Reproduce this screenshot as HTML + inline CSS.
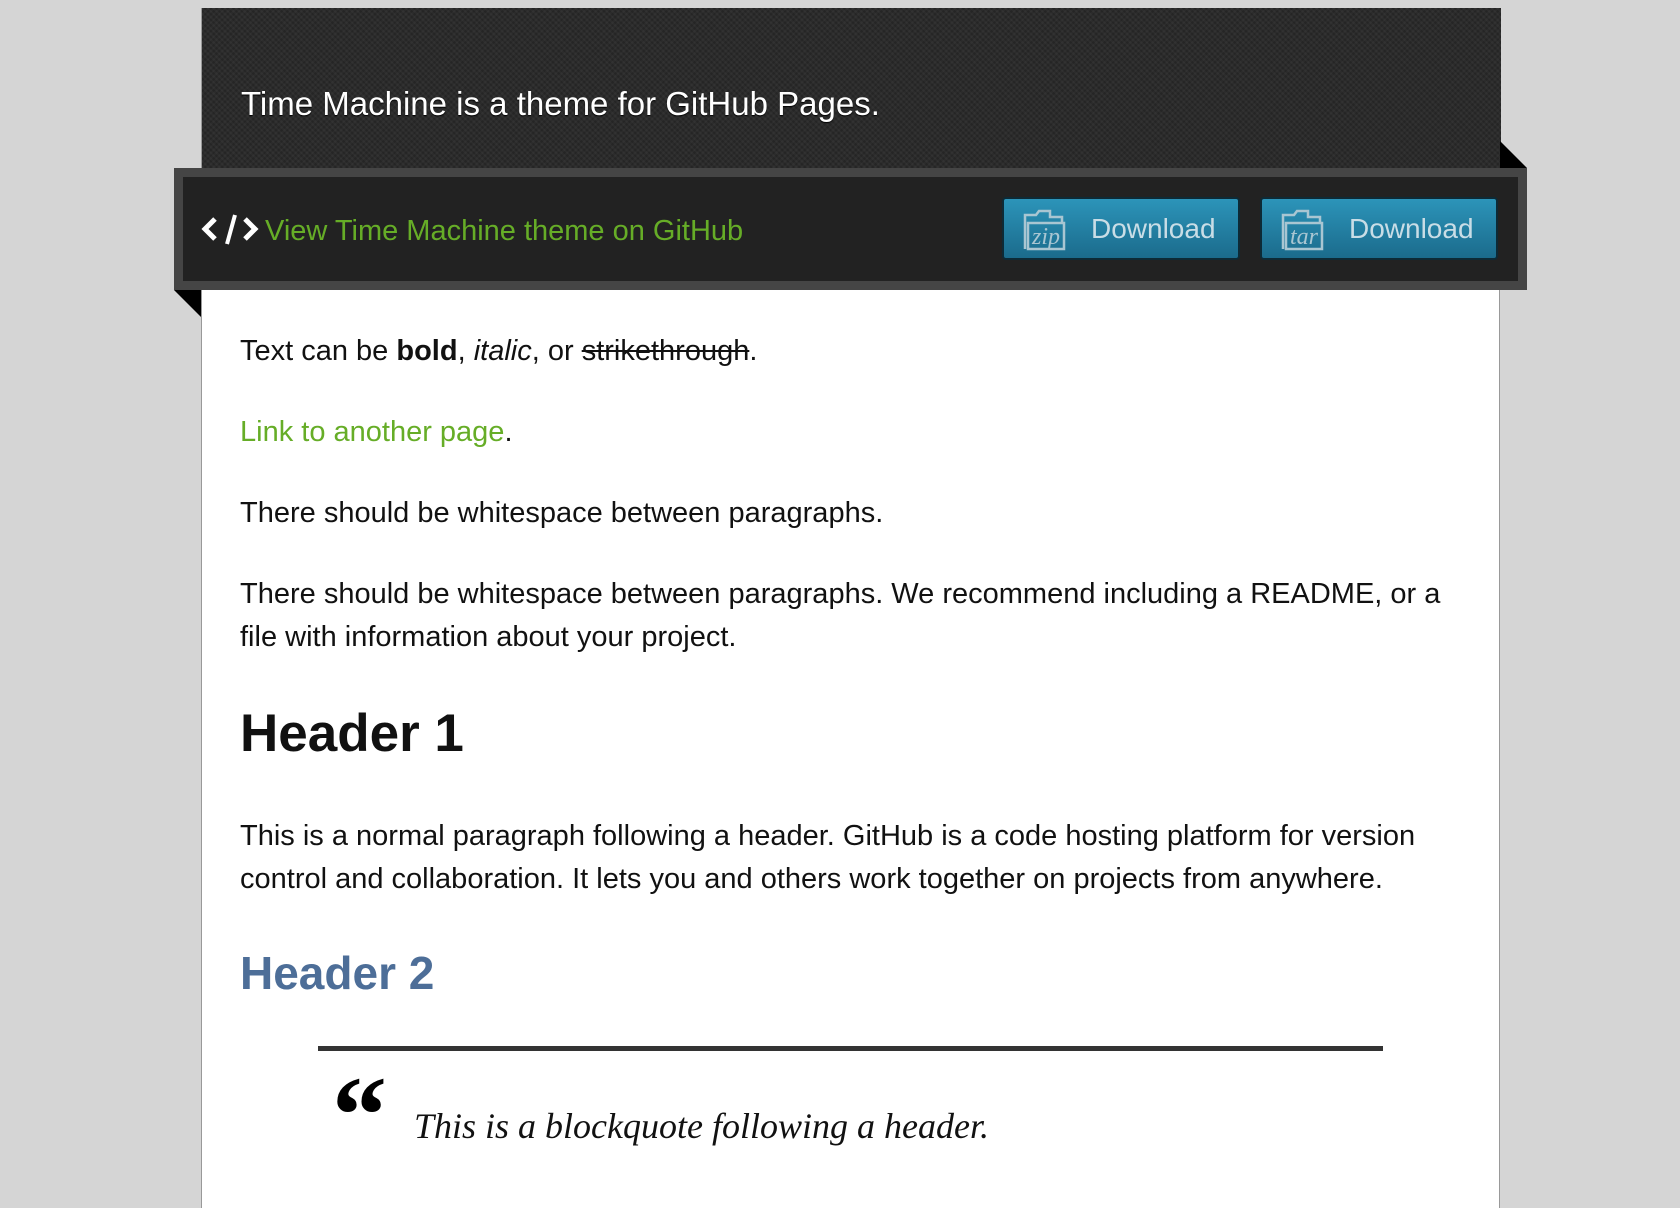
<!DOCTYPE html>
<html><head><meta charset="utf-8"><style>
html,body{margin:0;padding:0;background:#d5d5d5;width:1680px;height:1185px;overflow:hidden;font-family:"Liberation Sans",Arial,sans-serif}
#wrap{position:absolute;left:201px;top:8px;width:1299px;height:1200px;background:#fff;border-left:1px solid #999;border-right:1px solid #999;box-sizing:border-box}
#head{position:absolute;left:0;top:0;width:1299px;height:160px;background:#2b2b2b;background-image:repeating-linear-gradient(45deg,rgba(255,255,255,.03) 0 2px,transparent 2px 4px),repeating-linear-gradient(-45deg,rgba(0,0,0,.15) 0 2px,transparent 2px 4px)}
#head h1{position:absolute;left:39px;top:78px;margin:0;font-size:33px;font-weight:normal;color:#fff;line-height:36px;text-shadow:0 1px 1px #000;white-space:nowrap}
#nav{position:absolute;left:174px;top:168px;width:1353px;height:122px;background:#222;border:9px solid #454545;box-sizing:border-box}
.tri1{position:absolute;left:1500px;top:141px;width:0;height:0;border-left:27px solid #000;border-top:27px solid transparent}
.tri2{position:absolute;left:174px;top:290px;width:0;height:0;border-left:27px solid transparent;border-top:27px solid #000}
#nav .gh{position:absolute;left:18px;top:34px;font-size:29px;color:#66ad27;line-height:40px;white-space:nowrap}
#nav .gh svg{vertical-align:-6px;margin-right:4px}
.btn{position:absolute;top:20px;width:238px;height:63px;border:2px solid #0d2a36;border-radius:4px;background:linear-gradient(#2c94b9,#1b6b8c);box-sizing:border-box;color:#c9dde6;font-size:28px;line-height:59px}
.btn svg{position:absolute;left:18px;top:10px}
.btn span{position:absolute;left:87px}
#content{position:absolute;left:240px;top:330px;width:1300px;color:#111;font-size:29px;line-height:43px;white-space:nowrap}
p{margin:0 0 38px 0}
a{color:#66ad27;text-decoration:none}
h2.h1{font-size:53px;margin:0;line-height:60px;position:absolute;top:374px;color:#111}
h2.h2{font-size:46px;margin:0;line-height:52px;position:absolute;top:617px;color:#4d6e98}
</style></head><body>
<div id="wrap">
<div id="head"><h1>Time Machine is a theme for GitHub Pages.</h1></div>
</div>
<div class="tri1"></div><div class="tri2"></div>
<div id="nav">
<div class="gh"><svg width="60" height="34" viewBox="0 0 60 34"><path d="M14 7 L4 17 L14 27" fill="none" stroke="#fff" stroke-width="5"/><path d="M34 3 L26 32" fill="none" stroke="#fff" stroke-width="4"/><path d="M44 7 L54 17 L44 27" fill="none" stroke="#fff" stroke-width="5"/></svg>View Time Machine theme on GitHub</div>
<div class="btn" style="left:819px"><svg width="62" height="42" viewBox="0 0 62 42" fill="none" stroke="#a9c6d2" stroke-width="2.5"><path d="M3 40 V6 H14 L17 2 H28 V8 H40 V14"/><path d="M6 40 V14 H42 V40 Z"/><text x="10" y="35" font-family="Liberation Serif" font-style="italic" font-size="24" fill="#a9c6d2" stroke="none">zip</text></svg><span>Download</span></div>
<div class="btn" style="left:1077px"><svg width="62" height="42" viewBox="0 0 62 42" fill="none" stroke="#a9c6d2" stroke-width="2.5"><path d="M3 40 V6 H14 L17 2 H28 V8 H40 V14"/><path d="M6 40 V14 H42 V40 Z"/><text x="10" y="35" font-family="Liberation Serif" font-style="italic" font-size="24" fill="#a9c6d2" stroke="none">tar</text></svg><span>Download</span></div>
</div>
<div id="content">
<p>Text can be <b>bold</b>, <i>italic</i>, or <s>strikethrough</s>.</p>
<p><a>Link to another page</a>.</p>
<p>There should be whitespace between paragraphs.</p>
<p>There should be whitespace between paragraphs. We recommend including a README, or a<br>file with information about your project.</p>
<h2 class="h1">Header 1</h2>
<p style="position:absolute;top:485px">This is a normal paragraph following a header. GitHub is a code hosting platform for version<br>control and collaboration. It lets you and others work together on projects from anywhere.</p>
<h2 class="h2">Header 2</h2>
</div>
<div style="position:absolute;left:318px;top:1046px;width:1065px;height:5px;background:#333"></div>
<div style="position:absolute;left:332px;top:1060px;font-family:'Liberation Serif',serif;font-weight:bold;font-size:110px;line-height:110px;color:#000">&#8220;</div>
<div style="position:absolute;left:414px;top:1105px;font-family:'Liberation Serif',serif;font-style:italic;font-size:36px;line-height:42px;color:#111;white-space:nowrap">This is a blockquote following a header.</div>
</body></html>
